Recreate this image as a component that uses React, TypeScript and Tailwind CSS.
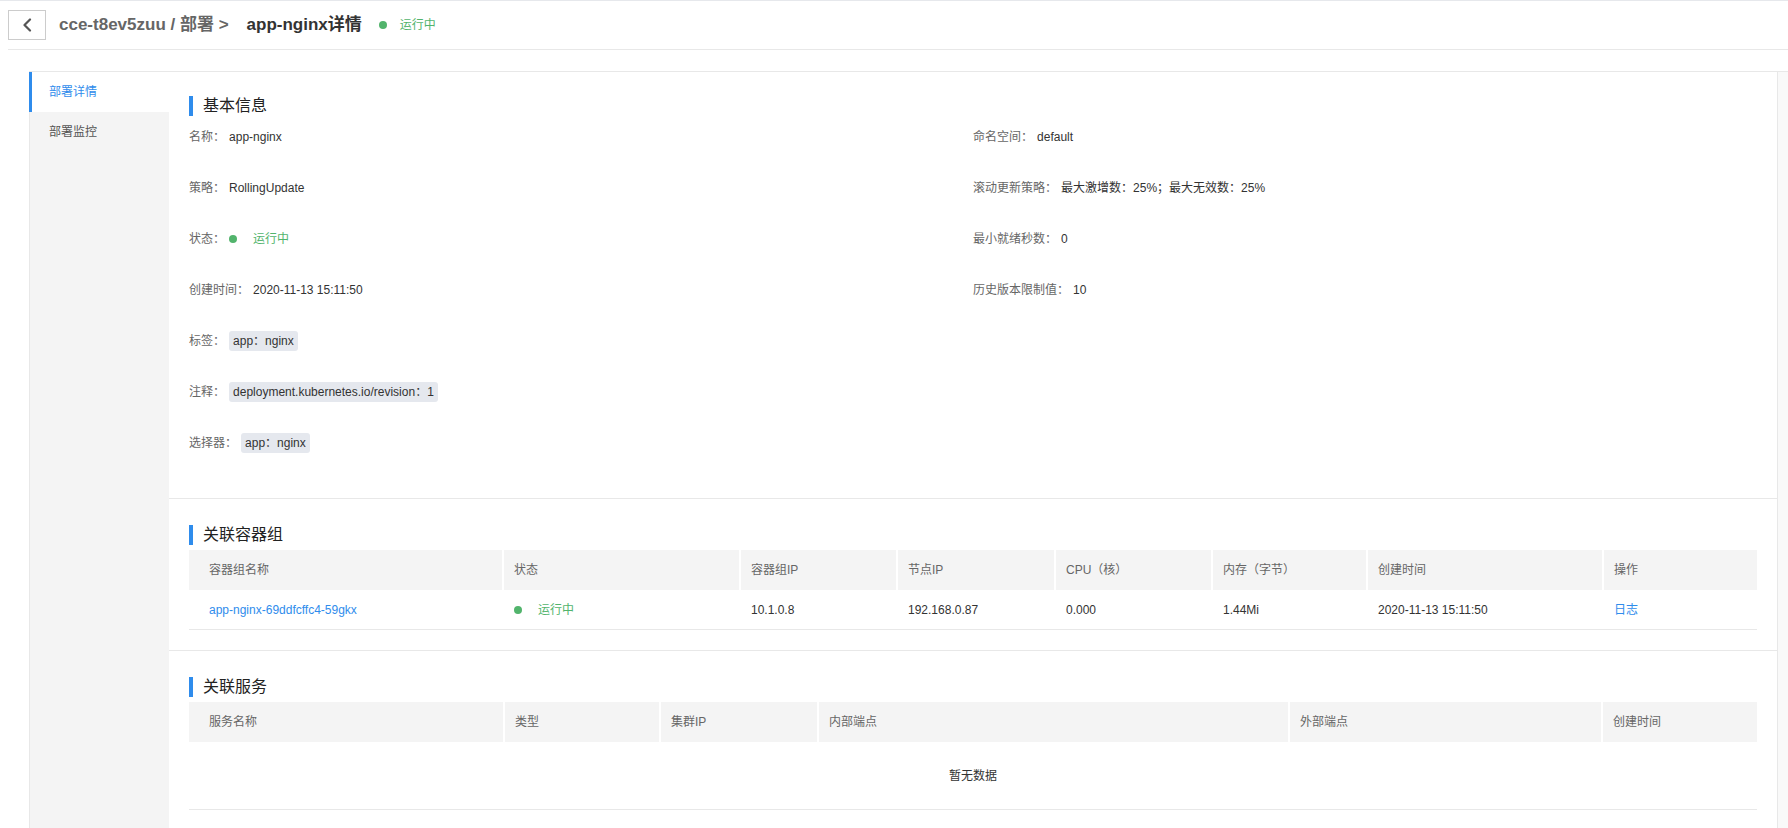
import React from "react";

const BLUE = "text-[#2f8cec]";

function Title({ children }: { children: React.ReactNode }) {
  return (
    <div className="flex h-5 items-center">
      <span className="h-5 w-1 bg-[#2f8cec]" />
      <span className="ml-[10px] text-[16px] leading-5 text-[#222]">
        {children}
      </span>
    </div>
  );
}

function Tag({ children }: { children: React.ReactNode }) {
  return (
    <span className="inline-flex h-[20px] items-center rounded-[3px] bg-[#e5e8ee] px-1 text-[#333]">
      {children}
    </span>
  );
}

function Running() {
  return (
    <span className="flex items-center">
      <span className="h-2 w-2 rounded-full bg-[#52b46c]" />
      <span className="ml-4 text-[#52b46c]">运行中</span>
    </span>
  );
}

function Field({ label, children }: { label: string; children: React.ReactNode }) {
  return (
    <div className="flex h-5 items-center">
      <span className="mr-1 text-[#666]">{label}：</span>
      <span className="flex items-center text-[#333]">{children}</span>
    </div>
  );
}

const podCols = "grid grid-cols-[313px_237px_157px_158px_157px_155px_236px_1fr]";
const svcCols = "grid grid-cols-[314px_156px_158px_471px_313px_1fr]";

export default function App() {
  const podHead = ["容器组名称", "状态", "容器组IP", "节点IP", "CPU（核）", "内存（字节）", "创建时间", "操作"];
  const svcHead = ["服务名称", "类型", "集群IP", "内部端点", "外部端点", "创建时间"];

  return (
    <div className="h-[828px] overflow-hidden border-t border-[#e6e8ec] bg-white font-['Liberation_Sans','Noto_Sans_CJK_SC',sans-serif] text-[12px]">
      {/* top bar */}
      <header className="ml-2 flex h-[49px] items-center border-b border-[#e8e8e8]">
        <button className="flex h-[30px] w-[38px] items-center justify-center border border-[#cccccc] bg-white">
          <svg width="10" height="14" viewBox="0 0 10 14">
            <polyline
              points="8,1.5 2.5,7 8,12.5"
              fill="none"
              stroke="#555"
              strokeWidth="2.2"
              strokeLinecap="round"
              strokeLinejoin="round"
            />
          </svg>
        </button>
        <span className="ml-[13px] text-[17px] font-semibold text-[#666]">
          cce-t8ev5zuu / 部署 &gt;
        </span>
        <span className="ml-[18px] text-[17px] font-bold text-[#333]">app-nginx详情</span>
        <span className="ml-[17px] h-2 w-2 rounded-full bg-[#52b46c]" />
        <span className="ml-[13px] text-[12px] text-[#52b46c]">运行中</span>
      </header>

      <div className="mt-[21px] ml-[29px] flex h-[760px] border-t border-l border-[#e8e8e8]">
        {/* side tabs */}
        <aside className="w-[139px] shrink-0 bg-[#f4f4f4]">
          <div className={`-ml-px flex h-10 items-center border-l-[3px] border-[#2f8cec] bg-white pl-[17px] ${BLUE}`}>
            部署详情
          </div>
          <div className="flex h-10 items-center pl-[19px] text-[#555]">部署监控</div>
        </aside>

        <main className="flex-1 border-r border-[#e8e8e8]">
          {/* basic info */}
          <section className="border-b border-[#e8e8e8] px-5 pt-6 pb-[45px]">
            <Title>基本信息</Title>
            <div className="mt-[11px] grid grid-cols-2">
              <div className="flex flex-col gap-[31px]">
                <Field label="名称">app-nginx</Field>
                <Field label="策略">RollingUpdate</Field>
                <Field label="状态">
                  <Running />
                </Field>
                <Field label="创建时间">2020-11-13 15:11:50</Field>
                <Field label="标签">
                  <Tag>app：nginx</Tag>
                </Field>
                <Field label="注释">
                  <Tag>deployment.kubernetes.io/revision：1</Tag>
                </Field>
                <Field label="选择器">
                  <Tag>app：nginx</Tag>
                </Field>
              </div>
              <div className="flex flex-col gap-[31px]">
                <Field label="命名空间">default</Field>
                <Field label="滚动更新策略">最大激增数：25%；最大无效数：25%</Field>
                <Field label="最小就绪秒数">0</Field>
                <Field label="历史版本限制值">10</Field>
              </div>
            </div>
          </section>

          {/* pods */}
          <section className="border-b border-[#e8e8e8] px-5 pt-[26px] pb-5">
            <Title>关联容器组</Title>
            <div className={`${podCols} mt-[5px] h-10 bg-[#f4f4f4] text-[#666]`}>
              {podHead.map((h, i) => (
                <div
                  key={h}
                  className={
                    i === 0
                      ? "flex items-center pl-5"
                      : "flex items-center border-l-2 border-white pl-[10px]"
                  }
                >
                  {h}
                </div>
              ))}
            </div>
            <div className={`${podCols} h-[40px] border-b border-[#e8e8e8] text-[#333]`}>
              <div className={`flex items-center pl-5 ${BLUE}`}>app-nginx-69ddfcffc4-59gkx</div>
              <div className="flex items-center border-l-2 border-transparent pl-[10px]">
                <Running />
              </div>
              <div className="flex items-center border-l-2 border-transparent pl-[10px]">10.1.0.8</div>
              <div className="flex items-center border-l-2 border-transparent pl-[10px]">192.168.0.87</div>
              <div className="flex items-center border-l-2 border-transparent pl-[10px]">0.000</div>
              <div className="flex items-center border-l-2 border-transparent pl-[10px]">1.44Mi</div>
              <div className="flex items-center border-l-2 border-transparent pl-[10px]">2020-11-13 15:11:50</div>
              <div className={`flex items-center border-l-2 border-transparent pl-[10px] ${BLUE}`}>日志</div>
            </div>
          </section>

          {/* services */}
          <section className="px-5 pt-[26px]">
            <Title>关联服务</Title>
            <div className={`${svcCols} mt-[5px] h-10 bg-[#f4f4f4] text-[#666]`}>
              {svcHead.map((h, i) => (
                <div
                  key={h}
                  className={
                    i === 0
                      ? "flex items-center pl-5"
                      : "flex items-center border-l-2 border-white pl-[10px]"
                  }
                >
                  {h}
                </div>
              ))}
            </div>
            <div className="flex h-[68px] items-center justify-center border-b border-[#e8e8e8] text-[#333]">
              暂无数据
            </div>
          </section>
        </main>

        <div className="w-[10px] shrink-0 bg-[#f9f9f9]" />
      </div>
    </div>
  );
}
